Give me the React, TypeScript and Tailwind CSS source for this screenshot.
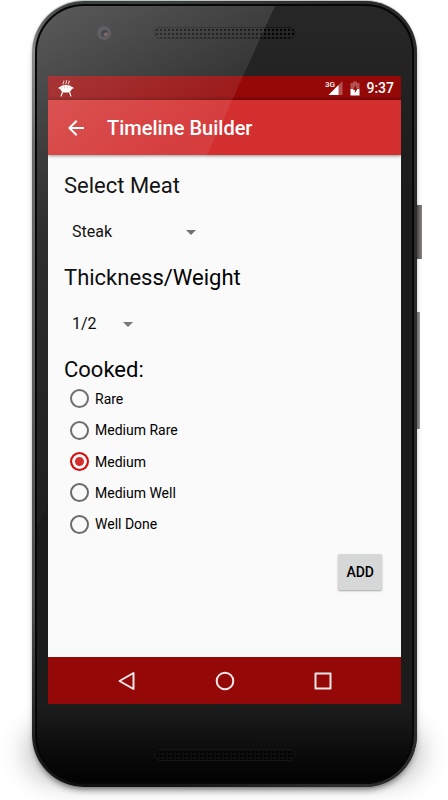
import { useState } from 'react'

const MEATS = ['Steak', 'Chicken', 'Pork', 'Burger']
const SIZES = ['1/2', '3/4', '1', '1 1/2']
const DONENESS = ['Rare', 'Medium Rare', 'Medium', 'Medium Well', 'Well Done']

interface SpinnerProps {
  id: string
  options: string[]
  value: string
  onChange: (value: string) => void
  className: string
}

function Spinner({ id, options, value, onChange, className }: SpinnerProps) {
  return (
    <div className={`my-[9px] grid h-12 items-center ${className}`}>
      <select
        id={id}
        value={value}
        onChange={e => onChange(e.target.value)}
        className="col-start-1 row-start-1 h-full w-full appearance-none bg-transparent pl-2 text-base"
      >
        {options.map(option => (
          <option key={option}>{option}</option>
        ))}
      </select>
      <svg
        viewBox="0 0 10 5"
        className="pointer-events-none col-start-1 row-start-1 h-[5px] w-2.5 justify-self-end"
        aria-hidden="true"
      >
        <path d="M0 0h10L5 5z" fill="#737373" />
      </svg>
    </div>
  )
}

function GrillIcon() {
  return (
    <svg viewBox="0 0 16 17" className="h-[17px] w-4" fill="none" stroke="#fff" aria-hidden="true">
      <path d="M5.2 4.300c-.8-1.500 1.300-2 .6-3.600M8 4.300c-.8-1.500 1.300-2.200.6-4M10.600 4.300c-.8-1.500 1.300-2 .6-3.600" strokeWidth="1" />
      <path
        d="M.3 8.400l.5-1.200L2 7c.9-1.400 3-2.100 6-2.100s5.100.7 6 2.100l1.200.2.5 1.200-1.700.4c-.6 1.900-2 3.100-3.600 3.700H5.600C4 11.900 2.600 10.700 2 8.800z"
        fill="#fff"
        stroke="none"
      />
      <path d="M4 6.600v1.600M6.600 6.200v2M9.300 6.200v2M12 6.600v1.600" stroke="#cf8f90" strokeWidth=".7" />
      <path d="M4.600 11.600L3 16.400M11.400 11.600l1.600 4.800" strokeWidth="1.200" />
    </svg>
  )
}

function SignalIcon() {
  return (
    <svg viewBox="0 0 18 16" className="h-4 w-[18px]" role="img" aria-label="3G signal">
      <path d="M17.500 1v14h-14z" fill="#fff" fillOpacity=".3" />
      <path d="M13.500 5v10h-10z" fill="#fff" />
      <text x="0" y="7" fontSize="8" fontWeight="500" fill="#fff" fontFamily="Roboto, sans-serif">
        3G
      </text>
    </svg>
  )
}

function BatteryIcon() {
  return (
    <svg viewBox="0 0 10 15" className="h-[15px] w-2.5" aria-hidden="true">
      <path d="M3 .5h4V2h2.500v6H.5V2H3z" fill="#fff" fillOpacity=".3" />
      <path d="M.5 8h9v6.500h-9z" fill="#fff" />
      <path d="M6 4L2.800 8.800h2v3.400L7.600 7.600H6z" fill="#940808" />
    </svg>
  )
}

function Speaker({ className }: { className: string }) {
  return (
    <div
      className={`mx-auto h-3 w-[141px] rounded-full border bg-[radial-gradient(circle,#000_1px,transparent_1px)] bg-[size:4px_4px] ${className}`}
    />
  )
}

function StatusBar() {
  return (
    <div className="flex h-6 items-center bg-[#940808] pr-[7px] pl-2.5 text-white shadow-[inset_0_-2px_2px_rgba(0,0,0,0.15)]">
      <GrillIcon />
      <div className="ml-auto flex items-center">
        <SignalIcon />
        <span className="ml-[7px]">
          <BatteryIcon />
        </span>
        <span className="ml-1.5 text-sm font-medium">9:37</span>
      </div>
    </div>
  )
}

function Toolbar() {
  return (
    <header className="relative flex h-[55px] items-center bg-[#d32f2f] pl-4 text-white shadow-[0_1px_3px_rgba(0,0,0,0.45)]">
      <button type="button" aria-label="Navigate up" className="flex size-6 items-center justify-center">
        <svg viewBox="0 0 24 24" className="size-6" fill="currentColor" aria-hidden="true">
          <path d="M20 11H7.830l5.590-5.590L12 4l-8 8 8 8 1.410-1.410L7.830 13H20v-2z" />
        </svg>
      </button>
      <h1 className="ml-[19px] text-xl font-medium">Timeline Builder</h1>
    </header>
  )
}

function NavigationBar() {
  return (
    <nav className="flex h-[47px] justify-center bg-[#940808] text-[#f7e8e8]">
      <button type="button" aria-label="Back" className="flex w-[98px] items-center justify-center">
        <svg viewBox="0 0 20 20" className="size-5" fill="none" stroke="currentColor" strokeWidth="2" strokeLinejoin="round" aria-hidden="true">
          <path d="M16.500 2v16L2.500 10z" />
        </svg>
      </button>
      <button type="button" aria-label="Home" className="flex w-[98px] items-center justify-center">
        <svg viewBox="0 0 20 20" className="size-5" fill="none" stroke="currentColor" strokeWidth="2" aria-hidden="true">
          <circle cx="10" cy="10" r="8.300" />
        </svg>
      </button>
      <button type="button" aria-label="Recent apps" className="flex w-[98px] items-center justify-center">
        <svg viewBox="0 0 20 20" className="size-5" fill="none" stroke="currentColor" strokeWidth="2" strokeLinejoin="round" aria-hidden="true">
          <rect x="2.500" y="2.500" width="15" height="15" />
        </svg>
      </button>
    </nav>
  )
}

function BuilderForm() {
  const [meat, setMeat] = useState('Steak')
  const [size, setSize] = useState('1/2')
  const [cooked, setCooked] = useState('Medium')

  return (
    <form
      className="flex flex-col bg-[#fafafa] px-4 pt-[18px] pb-[67px] text-black"
      onSubmit={e => e.preventDefault()}
    >
      <label htmlFor="meat" className="text-[22px] leading-[26px]">
        Select Meat
      </label>
      <Spinner id="meat" options={MEATS} value={meat} onChange={setMeat} className="w-33" />

      <label htmlFor="size" className="text-[22px] leading-[26px]">
        Thickness/Weight
      </label>
      <Spinner id="size" options={SIZES} value={size} onChange={setSize} className="w-[69px]" />

      <fieldset>
        <legend className="text-[22px] leading-[26px]">Cooked:</legend>
        <div className="flex h-[157px] flex-col pl-1.5">
          {DONENESS.map(level => (
            <label key={level} className="flex flex-1 items-center gap-1.5 text-sm">
              <input
                type="radio"
                name="cooked"
                value={level}
                checked={cooked === level}
                onChange={() => setCooked(level)}
                className="size-[19px] appearance-none rounded-full border-2 border-[#6b6b6b] checked:border-[#d50f0f] checked:bg-[#d32f2f] checked:shadow-[inset_0_0_0_3px_#fafafa]"
              />
              {level}
            </label>
          ))}
        </div>
      </fieldset>

      <button
        type="submit"
        className="mt-3.5 mr-[3px] h-9 self-end rounded-xs bg-[#d6d7d7] px-2 text-sm font-medium shadow-[0_1px_2px_rgba(0,0,0,0.35)]"
      >
        ADD
      </button>
    </form>
  )
}

export default function App() {
  return (
    <main className="relative isolate overflow-hidden bg-white pt-px pr-[31px] pb-[13px] pl-8 font-[Roboto,sans-serif]">
      {/* Soft shadow on the table below the phone */}
      <div className="absolute inset-x-6 bottom-4 -z-10 h-16 rounded-[40px] bg-black/20 blur-md" />

      <div className="relative rounded-[52px] bg-[linear-gradient(180deg,#3a3f3c_0,#8c8c8c_50px,#6a6a6a_150px,#505050_600px,#1c1c1c_750px,#111_100%)] p-[3px] shadow-[0_5px_7px_-3px_rgba(0,0,0,0.6),0_-1px_1px_rgba(80,90,85,0.4)]">
        <div className="absolute inset-0 rounded-[52px] bg-linear-to-r from-transparent from-30% to-[#2c2c2c] to-80%" />

        {/* Power and volume keys */}
        <div className="absolute top-[204px] -right-[5px] h-[54px] w-[5px] bg-linear-to-r from-[#4a4747] to-[#8a8585]" />
        <div className="absolute top-[311px] -right-[3px] h-[117px] w-[3px] bg-linear-to-r from-[#666] to-[#999]" />

        <div className="relative overflow-hidden rounded-[49px] border-2 border-[#060606] bg-[linear-gradient(180deg,#272727_0,#1c1c1c_180px,#1c1c1c_700px,#080808_755px,#020202_100%)] px-[11px]">
          <div className="h-[70px] pt-[21px]">
            <Speaker className="border-[#161616] bg-[#262626]" />
          </div>
          <div className="absolute top-[20px] left-[60px] flex size-[14px] items-center justify-center rounded-full bg-[#3c3a3d]">
            <div className="size-[7px] rounded-full bg-[radial-gradient(circle_at_70%_65%,#8a5a50_0,#1c1c2c_45%)]" />
          </div>

          <div className="overflow-hidden">
            <StatusBar />
            <Toolbar />
            <BuilderForm />
            <NavigationBar />
          </div>

          <div className="h-[78px] pt-[45px]">
            <Speaker className="border-[#161616] bg-[#0c0c0c]" />
          </div>

          {/* Diagonal glass reflection */}
          <svg viewBox="0 0 240 520" className="pointer-events-none absolute top-0 left-0 h-[520px] w-60" aria-hidden="true">
            <defs>
              <linearGradient id="gloss" x1="0" y1="0" x2="0.35" y2="1">
                <stop offset="0" stopColor="#fff" stopOpacity=".24" />
                <stop offset=".4" stopColor="#fff" stopOpacity=".08" />
                <stop offset="1" stopColor="#fff" stopOpacity="0" />
              </linearGradient>
            </defs>
            <path d="M0 0h238L1 520H0z" fill="url(#gloss)" />
          </svg>
        </div>
      </div>
    </main>
  )
}
